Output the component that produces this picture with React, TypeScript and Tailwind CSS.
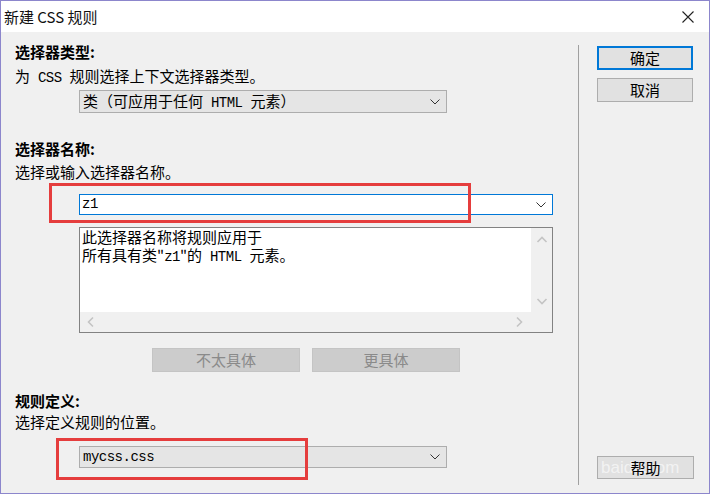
import React from "react";

const M = ({ children }: { children: React.ReactNode }) => (
  <span className="font-['Liberation_Mono',monospace] text-[14px] tracking-[-0.5px] whitespace-pre">{children}</span>
);

const Chevron = ({ color = "#333" }: { color?: string }) => (
  <svg width="10" height="6" viewBox="0 0 10 6" fill="none">
    <path d="M0.5 0.5 L5 5 L9.5 0.5" stroke={color} strokeWidth="1" />
  </svg>
);

const Arrow = ({ d }: { d: string }) => (
  <svg width="12" height="12" viewBox="0 0 12 12" fill="none">
    <path d={d} stroke="#c4c4c4" strokeWidth="1.6" />
  </svg>
);

export default function App() {
  return (
    <div className="w-[710px] h-[494px] border border-[#8c86cc] flex flex-col font-['Noto_Sans_CJK_SC',sans-serif] text-[15px] text-black overflow-hidden">
      {/* Title bar */}
      <div className="h-[31px] bg-white flex items-center justify-between pl-[3px] pr-[15px] shrink-0">
        <span className="text-[15px] leading-[20px] text-[#111]">新建 CSS 规则</span>
        <svg width="12" height="12" viewBox="0 0 12 12" fill="none">
          <path d="M0.5 0.5 L11.5 11.5 M11.5 0.5 L0.5 11.5" stroke="#222" strokeWidth="1.1" />
        </svg>
      </div>

      {/* Body */}
      <div className="flex-1 bg-[#f0f0f0] flex">
        {/* Left column */}
        <div className="w-[577px] pl-[14px] flex flex-col">
          <div className="mt-[10px] h-[20px] leading-[20px] font-bold">选择器类型:</div>
          <div className="mt-[4px] h-[20px] leading-[20px]">
            为<M> CSS </M>规则选择上下文选择器类型。
          </div>
          <div className="mt-[4px] ml-[64px] w-[368px] h-[23px] bg-[#e5e5e5] border border-[#adadad] flex items-center justify-between pl-[3px] pr-[6px]">
            <span className="leading-[20px]">
              类（可应用于任何<M> HTML </M>元素）
            </span>
            <Chevron />
          </div>

          <div className="mt-[26px] h-[20px] leading-[20px] font-bold">选择器名称:</div>
          <div className="mt-[3px] h-[20px] leading-[20px]">选择或输入选择器名称。</div>
          <div className="relative mt-[12px] ml-[64px] w-[474px] h-[21px] bg-white border border-[#0078d7] flex items-center justify-between pl-[2px] pr-[6px]">
            <M>z1</M>
            <Chevron />
            <div className="absolute left-[-31px] top-[-12px] w-[422px] h-[40px] border-[3px] border-[#e53d3d]" />
          </div>

          <div className="mt-[12px] ml-[64px] w-[474px] h-[106px] border border-[#828282] bg-white flex flex-col">
            <div className="flex flex-1">
              <div className="flex-1 pl-[2px] pt-[0px] leading-[18px]">
                <div>此选择器名称将规则应用于</div>
                <div>
                  所有具有类"<M>z1</M>"的<M> HTML </M>元素。
                </div>
              </div>
              <div className="w-[21px] bg-[#f0f0f0] flex flex-col items-center justify-between pt-[6px] pb-[5px]">
                <Arrow d="M1.5 8 L6 3.5 L10.5 8" />
                <Arrow d="M1.5 4 L6 8.5 L10.5 4" />
              </div>
            </div>
            <div className="h-[20px] bg-[#f0f0f0] flex items-center justify-between pl-[5px] pr-[27px]">
              <Arrow d="M8 1.5 L3.5 6 L8 10.5" />
              <Arrow d="M4 1.5 L8.5 6 L4 10.5" />
            </div>
          </div>

          <div className="mt-[15px] ml-[137px] flex gap-[12px]">
            <div className="w-[148px] h-[24px] bg-[#cccccc] border border-[#c4c4c4] flex items-center justify-center text-[#8a8a8a] leading-[20px]">
              不太具体
            </div>
            <div className="w-[148px] h-[24px] bg-[#cccccc] border border-[#c4c4c4] flex items-center justify-center text-[#8a8a8a] leading-[20px]">
              更具体
            </div>
          </div>

          <div className="mt-[19px] h-[20px] leading-[20px] font-bold">规则定义:</div>
          <div className="mt-[1px] h-[20px] leading-[20px]">选择定义规则的位置。</div>
          <div className="relative mt-[14px] ml-[64px] w-[368px] h-[22px] bg-[#e5e5e5] border border-[#adadad] flex items-center justify-between pl-[3px] pr-[6px]">
            <M>mycss.css</M>
            <Chevron />
            <div className="absolute left-[-24px] top-[-9px] w-[252px] h-[42px] border-[3px] border-[#e53d3d]" />
          </div>
        </div>

        {/* Separator */}
        <div className="w-px bg-[#a0a0a0] mt-[13px] mb-[8px]" />

        {/* Right column */}
        <div className="flex-1 flex flex-col pl-[18px]">
          <div className="mt-[14px] w-[96px] h-[24px] bg-[#e1e1e1] border-2 border-[#0078d7] flex items-center justify-center leading-[20px]">
            确定
          </div>
          <div className="mt-[8px] w-[96px] h-[24px] bg-[#e1e1e1] border border-[#adadad] flex items-center justify-center leading-[20px]">
            取消
          </div>
          <div className="mt-auto mb-[14px] relative w-[97px] h-[23px] bg-[#e1e1e1] border border-[#adadad] flex items-center justify-center leading-[20px] overflow-hidden">
            <span className="absolute left-[3px] top-[1px] text-[17px] leading-[20px] text-white/60 font-['Liberation_Sans',sans-serif]">
              baidu.com
            </span>
            <span className="relative">帮助</span>
          </div>
        </div>
      </div>
    </div>
  );
}
